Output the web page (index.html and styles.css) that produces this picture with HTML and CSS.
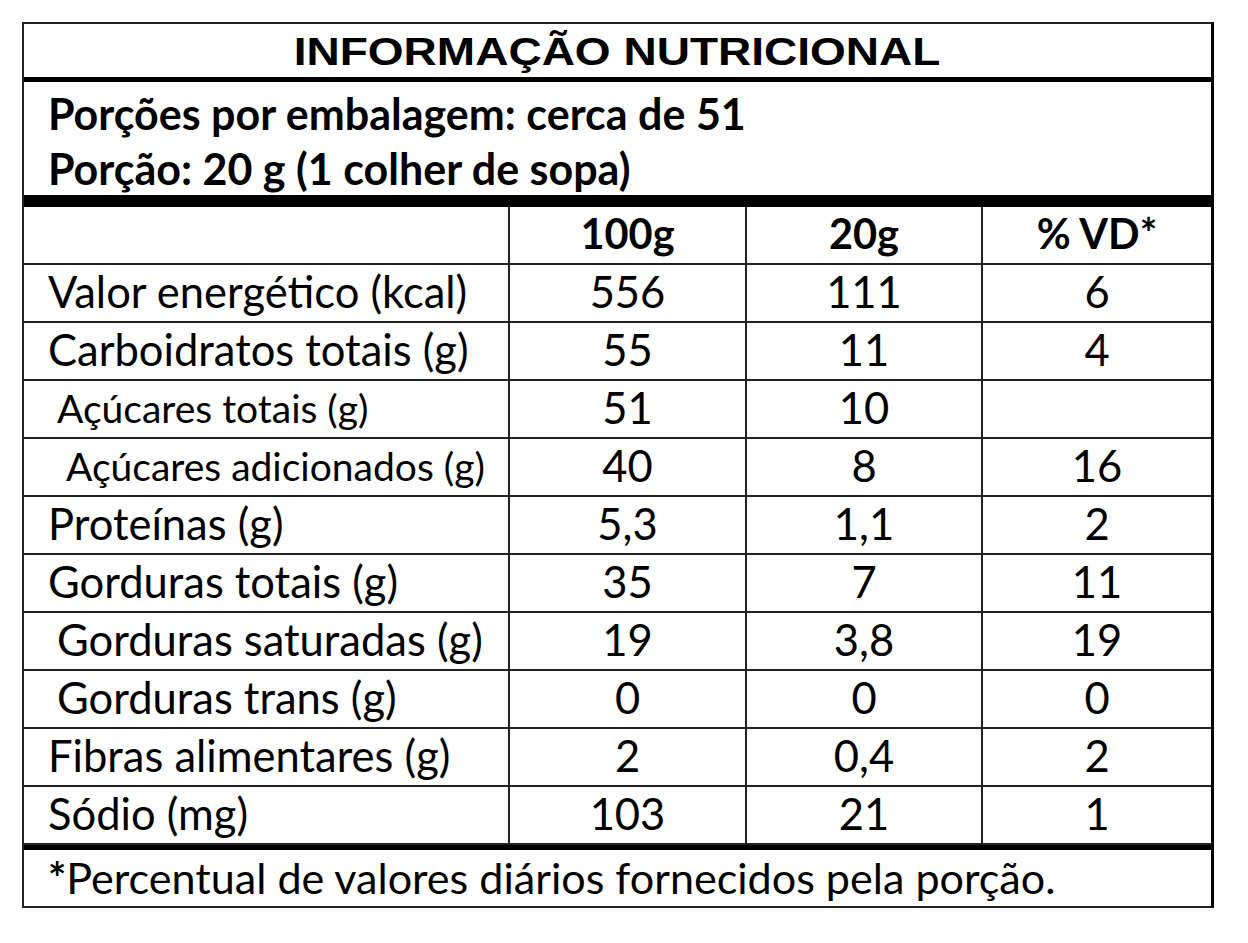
FILE: index.html
```html
<!DOCTYPE html>
<html lang="pt-BR">
<head>
<meta charset="utf-8">
<title>Informação Nutricional</title>
<link rel="stylesheet" href="styles.css">
</head>
<body>
<div class="label">
  <div class="title"><span class="title-text">INFORMAÇÃO NUTRICIONAL</span></div>
  <div class="servings">
    <div class="serv-line">Porções por embalagem: cerca de 51</div>
    <div class="serv-line">Porção: 20 g (1 colher de sopa)</div>
  </div>
  <div class="grid">
    <div class="cell name head"></div>
    <div class="cell num head">100g</div>
    <div class="cell num head">20g</div>
    <div class="cell num head last">% VD*</div>

    <div class="cell name">Valor energético (kcal)</div>
    <div class="cell num">556</div>
    <div class="cell num">111</div>
    <div class="cell num last">6</div>

    <div class="cell name">Carboidratos totais (g)</div>
    <div class="cell num">55</div>
    <div class="cell num">11</div>
    <div class="cell num last">4</div>

    <div class="cell name ind1 small">Açúcares totais (g)</div>
    <div class="cell num">51</div>
    <div class="cell num">10</div>
    <div class="cell num last"></div>

    <div class="cell name ind2 small">Açúcares adicionados (g)</div>
    <div class="cell num">40</div>
    <div class="cell num">8</div>
    <div class="cell num last">16</div>

    <div class="cell name">Proteínas (g)</div>
    <div class="cell num">5,3</div>
    <div class="cell num">1,1</div>
    <div class="cell num last">2</div>

    <div class="cell name">Gorduras totais (g)</div>
    <div class="cell num">35</div>
    <div class="cell num">7</div>
    <div class="cell num last">11</div>

    <div class="cell name ind1">Gorduras saturadas (g)</div>
    <div class="cell num">19</div>
    <div class="cell num">3,8</div>
    <div class="cell num last">19</div>

    <div class="cell name ind1">Gorduras trans (g)</div>
    <div class="cell num">0</div>
    <div class="cell num">0</div>
    <div class="cell num last">0</div>

    <div class="cell name">Fibras alimentares (g)</div>
    <div class="cell num">2</div>
    <div class="cell num">0,4</div>
    <div class="cell num last">2</div>

    <div class="cell name">Sódio (mg)</div>
    <div class="cell num">103</div>
    <div class="cell num">21</div>
    <div class="cell num last">1</div>
  </div>
  <div class="footer"><span class="star">*</span>Percentual de valores diários fornecidos pela porção.</div>
</div>
</body>
</html>
```

FILE: styles.css
```css
html, body {
  margin: 0;
  padding: 0;
  background: #fff;
}

body {
  font-family: Lato, "Open Sans", sans-serif;
  color: #000;
}

.label {
  box-sizing: border-box;
  width: 1192px;
  margin: 22px 0 0 22px;
  border: 2px solid #222;
  border-right: 3px solid #000;
}

.title {
  height: 53px;
  border-bottom: 5px solid #000;
  display: flex;
  align-items: center;
  justify-content: center;
}

.title-text {
  display: inline-block;
  font-family: "Liberation Sans", Arial, sans-serif;
  font-weight: bold;
  font-size: 39px;
  line-height: 1;
  transform: scaleX(1.18);
  padding-top: 2px;
}

.servings {
  box-sizing: border-box;
  height: 125px;
  border-bottom: 12px solid #000;
  padding: 4px 0 0 24px;
}

.serv-line {
  font-weight: bold;
  font-size: 43px;
  line-height: 55px;
  white-space: nowrap;
}

.grid {
  display: grid;
  grid-template-columns: 486px 237px 236px 1fr;
  grid-auto-rows: 58px;
}

.cell {
  box-sizing: border-box;
  border-right: 2px solid #222;
  border-bottom: 2px solid #222;
  display: flex;
  align-items: center;
  font-size: 43.5px;
  line-height: 1;
  white-space: nowrap;
  padding-bottom: 2px;
}

.cell.last {
  border-right: none;
}

.name {
  padding-left: 24px;
}

.name.ind1 {
  padding-left: 33px;
}

.name.ind2 {
  padding-left: 42px;
}

.name.small {
  font-size: 39px;
}

.num {
  justify-content: center;
}

.head {
  font-weight: bold;
  font-size: 41.5px;
}

.footer {
  box-sizing: border-box;
  height: 61px;
  border-top: 5px solid #000;
  padding-left: 24px;
  display: flex;
  align-items: center;
  font-size: 43.1px;
  line-height: 1;
  white-space: nowrap;
}

.star {
  font-weight: bold;
}
```
